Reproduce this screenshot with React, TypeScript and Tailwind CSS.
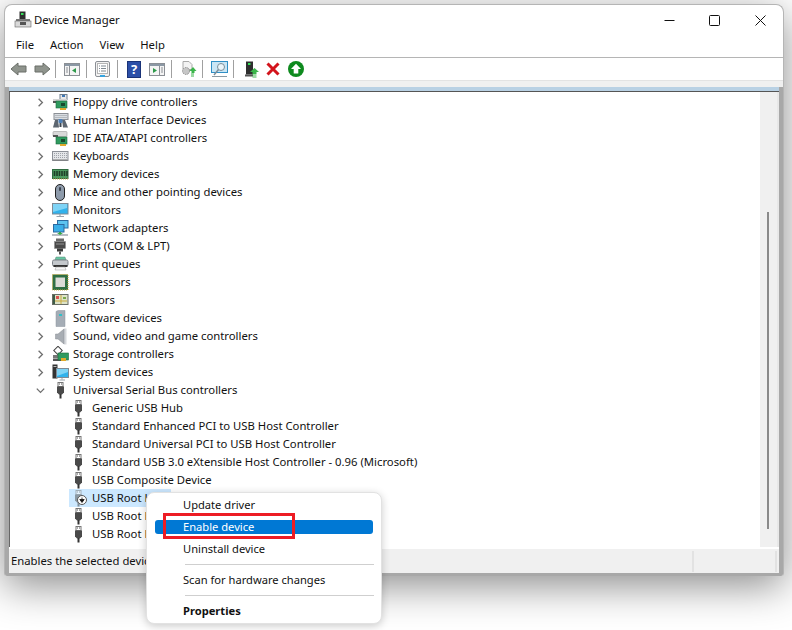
import React from 'react';

const Chip = () => (
  <>
    <rect x="4" y="7" width="11" height="7" fill="#2f9a5f" stroke="#1c6b3e" strokeWidth="0.6" />
    <rect x="9" y="9" width="4" height="3" fill="#18492c" />
    <rect x="8" y="14" width="6" height="2" fill="#e0a92a" />
  </>
);

const TreeIcon: React.FC<{ name: string }> = ({ name }) => {
  switch (name) {
    case 'floppy':
      return (
        <svg width="17" height="17" viewBox="0 0 17 17">
          <rect x="8" y="0.5" width="7" height="5" fill="#e8e8e8" stroke="#6f7f8f" />
          <rect x="10" y="1" width="3" height="2" fill="#3f77b5" />
          <rect x="1" y="5" width="14" height="3" fill="#d4d4d4" />
          <rect x="1" y="7" width="5" height="2" fill="#555" />
          <Chip />
        </svg>
      );
    case 'hid':
      return (
        <svg width="17" height="17" viewBox="0 0 17 17">
          <rect x="2" y="1.5" width="14" height="6" fill="#d9dde2" stroke="#8b8f95" />
          <path d="M3.5 3.5h11M3.5 5.5h11" stroke="#8f949a" strokeDasharray="1 1" />
          <path d="M1 15.5 3 8h3l1 7.5z" fill="#5d6670" />
          <path d="M11 15.5 10 8h3l3 7.5z" fill="#5d6670" />
          <rect x="6.5" y="7" width="4" height="4" rx="1" fill="#4c7fb8" />
          <rect x="7.5" y="11" width="2" height="4" fill="#3d4650" />
        </svg>
      );
    case 'ide':
      return (
        <svg width="17" height="17" viewBox="0 0 17 17">
          <rect x="1" y="1.5" width="14" height="5" rx="1" fill="#d9d9d9" stroke="#9a9a9a" strokeWidth="0.6" />
          <rect x="1" y="5" width="5" height="2" fill="#555" />
          <Chip />
        </svg>
      );
    case 'keyboard':
      return (
        <svg width="17" height="17" viewBox="0 0 17 17">
          <rect x="0.5" y="3.5" width="15.5" height="9" fill="#e4e6e9" stroke="#8c9097" />
          <path d="M2 5.5h13M2 7.5h13M2 9.5h13" stroke="#9fa3a9" strokeDasharray="1 1" />
          <rect x="1" y="11.5" width="14.5" height="1" fill="#777" />
        </svg>
      );
    case 'memory':
      return (
        <svg width="17" height="17" viewBox="0 0 17 17">
          <rect x="0.5" y="3.5" width="15.5" height="9" fill="#4d9a5f" stroke="#2f6b40" />
          <path d="M2.5 5v5M5 5v5M7.5 5v5M10 5v5M12.5 5v5M15 5v5" stroke="#1f3f28" strokeWidth="1.6" />
          <path d="M1 13h15" stroke="#c9b04a" strokeDasharray="1 1" />
        </svg>
      );
    case 'mouse':
      return (
        <svg width="17" height="17" viewBox="0 0 17 17">
          <rect x="3.5" y="0.5" width="9" height="16" rx="4.5" fill="#8e9bab" stroke="#222" />
          <rect x="7" y="3" width="2" height="4" rx="1" fill="#3b4552" />
        </svg>
      );
    case 'monitor':
      return (
        <svg width="17" height="17" viewBox="0 0 17 17">
          <rect x="0.5" y="1.5" width="15.5" height="10.5" fill="#31b2ec" stroke="#7f8b96" />
          <path d="M1 2h14v4L1 10z" fill="#7fd4f6" />
          <path d="M8 12v2M4.5 14.5h7.5" stroke="#9aa3ab" strokeWidth="1.2" />
        </svg>
      );
    case 'network':
      return (
        <svg width="17" height="17" viewBox="0 0 17 17">
          <rect x="5.5" y="0.5" width="10.5" height="7.5" fill="#5cc3f0" stroke="#2c6aa0" />
          <rect x="1.5" y="4.5" width="10.5" height="7.5" fill="#3aaee8" stroke="#2c6aa0" />
          <path d="M0 15h16" stroke="#9aa3ab" strokeWidth="1.4" />
          <path d="M7 12v1H5l3 2 3-2H9v-1z" fill="#35a845" />
        </svg>
      );
    case 'ports':
      return (
        <svg width="17" height="17" viewBox="0 0 17 17">
          <rect x="4" y="0.5" width="8" height="3" fill="#6a6a6a" />
          <rect x="2.5" y="3.5" width="11" height="7" fill="#4a4a4a" stroke="#8a8a8a" strokeWidth="0.5" />
          <path d="M4.5 6h7" stroke="#ddd" strokeDasharray="1 1" />
          <rect x="5" y="10.5" width="6" height="3" fill="#3a3a3a" />
          <rect x="7" y="13.5" width="2" height="3" fill="#555" />
        </svg>
      );
    case 'printer':
      return (
        <svg width="17" height="17" viewBox="0 0 17 17">
          <path d="M4 1h9l1 3H3z" fill="#67c6a2" stroke="#5a8a78" strokeWidth="0.5" />
          <rect x="0.5" y="4" width="15.5" height="6" rx="1.5" fill="#c4c8cc" stroke="#7d8288" />
          <rect x="1.5" y="9" width="14" height="2" fill="#333" />
          <path d="M4 11h9l1 3H3z" fill="#f5f5f5" stroke="#999" strokeWidth="0.5" />
        </svg>
      );
    case 'cpu':
      return (
        <svg width="17" height="17" viewBox="0 0 17 17">
          <rect x="0.5" y="0.5" width="15.5" height="15.5" fill="#2f6f45" stroke="#c7a83c" strokeDasharray="1 1" />
          <rect x="1.5" y="1.5" width="13.5" height="13.5" fill="#2f6f45" />
          <rect x="3.5" y="3.5" width="9.5" height="9.5" fill="#dcdcd8" />
        </svg>
      );
    case 'sensor':
      return (
        <svg width="17" height="17" viewBox="0 0 17 17">
          <rect x="0.5" y="2.5" width="15.5" height="10" fill="#dde3c8" stroke="#6a6f66" />
          <path d="M1 9h14M9 3v9" stroke="#c9a93c" />
          <rect x="4" y="4" width="3" height="3" fill="#d9534f" />
          <rect x="11" y="5" width="3" height="2" fill="#7aa84a" />
          <rect x="1" y="3" width="2" height="9" fill="#3e5c46" />
        </svg>
      );
    case 'software':
      return (
        <svg width="17" height="17" viewBox="0 0 17 17">
          <path d="M4 1.5 6 0.5h7v16H4z" fill="#a5adb6" stroke="#8d959e" strokeWidth="0.5" />
          <rect x="7" y="4" width="3" height="2" fill="#30c0c8" />
        </svg>
      );
    case 'sound':
      return (
        <svg width="17" height="17" viewBox="0 0 17 17">
          <rect x="12" y="0.5" width="2.5" height="16" fill="#d5d8db" />
          <path d="M12 1 6 6H3.5v5H6l6 5z" fill="#a8adb3" stroke="#8a8f95" strokeWidth="0.5" />
        </svg>
      );
    case 'storage':
      return (
        <svg width="17" height="17" viewBox="0 0 17 17">
          <rect x="3" y="1.5" width="6" height="6" transform="rotate(45 6 4.5)" fill="#fff" stroke="#444" />
          <rect x="1" y="9" width="9" height="3" fill="#777" />
          <rect x="1" y="12.5" width="9" height="2.5" fill="#555" />
          <rect x="6" y="7" width="10.5" height="7" fill="#2f9a5f" stroke="#1c6b3e" strokeWidth="0.6" />
          <rect x="9" y="12" width="5" height="3" fill="#e0a92a" />
        </svg>
      );
    case 'system':
      return (
        <svg width="17" height="17" viewBox="0 0 17 17">
          <rect x="0.5" y="0.5" width="5" height="14" fill="#333" />
          <rect x="1.5" y="2" width="3" height="1" fill="#bbb" />
          <rect x="4.5" y="4.5" width="12" height="9" fill="#31b2ec" stroke="#7f8b96" />
          <path d="M5 5h11v3L5 12z" fill="#7fd4f6" />
          <path d="M10 14v1.5M7.5 16h5.5" stroke="#9aa3ab" />
        </svg>
      );
    default:
      return (
        <svg width="17" height="17" viewBox="0 0 17 17">
          <rect x="6" y="0.5" width="5" height="4" fill="#fff" stroke="#777" />
          <rect x="7" y="1.5" width="1" height="1" fill="#555" />
          <rect x="9" y="1.5" width="1" height="1" fill="#555" />
          <path d="M5 4.5h7v6l-2 2H7l-2-2z" fill="#4a4a4a" />
          <rect x="7.5" y="12" width="2" height="4.5" fill="#333" />
        </svg>
      );
  }
};

const Chevron = ({ open }: { open?: boolean }) => (
  <svg width="9" height="9" viewBox="0 0 9 9" fill="none" stroke="#6f6f6f" strokeWidth="1.3">
    {open ? <path d="M0.8 2.6 4.5 6.4 8.2 2.6" /> : <path d="M2.6 0.8 6.4 4.5 2.6 8.2" />}
  </svg>
);

const topRows = [
  ['floppy', 'Floppy drive controllers'],
  ['hid', 'Human Interface Devices'],
  ['ide', 'IDE ATA/ATAPI controllers'],
  ['keyboard', 'Keyboards'],
  ['memory', 'Memory devices'],
  ['mouse', 'Mice and other pointing devices'],
  ['monitor', 'Monitors'],
  ['network', 'Network adapters'],
  ['ports', 'Ports (COM & LPT)'],
  ['printer', 'Print queues'],
  ['cpu', 'Processors'],
  ['sensor', 'Sensors'],
  ['software', 'Software devices'],
  ['sound', 'Sound, video and game controllers'],
  ['storage', 'Storage controllers'],
  ['system', 'System devices'],
];

const usbRows = [
  'Generic USB Hub',
  'Standard Enhanced PCI to USB Host Controller',
  'Standard Universal PCI to USB Host Controller',
  'Standard USB 3.0 eXtensible Host Controller - 0.96 (Microsoft)',
  'USB Composite Device',
];

const ToolSep = () => <div className="w-px h-[18px] bg-[#a0a0a0]" />;

const Toolbar = () => (
  <div className="h-[23px] flex items-center pl-[5px] border-b border-[#e3e3e3]">
    <svg width="18" height="16" viewBox="0 0 18 16">
      <path d="M1 8 8 2v3h8v6H8v3z" fill="#8f948d" stroke="#6a6f69" />
    </svg>
    <svg width="18" height="16" viewBox="0 0 18 16" className="ml-[5px]">
      <path d="M17 8 10 2v3H2v6h8v3z" fill="#8f948d" stroke="#6a6f69" />
    </svg>
    <div className="ml-[4px]"><ToolSep /></div>
    <svg width="16" height="16" viewBox="0 0 16 16" className="ml-2">
      <rect x="0.5" y="2.5" width="15" height="12" fill="#f4f4f4" stroke="#8b8f95" />
      <rect x="1" y="3" width="14" height="2" fill="#8b98a5" />
      <path d="M5.5 5v9" stroke="#8b8f95" />
      <path d="M2 7h2M2 9h2M2 11h2" stroke="#8b8f95" />
      <path d="M12 7v5L8 9.500z" fill="#2d9a4a" />
    </svg>
    <div className="ml-[6px]"><ToolSep /></div>
    <svg width="16" height="17" viewBox="0 0 16 17" className="ml-2">
      <rect x="0.5" y="0.5" width="14" height="15" rx="1.5" fill="#f2f2f2" stroke="#8b8f95" />
      <rect x="2.5" y="2.5" width="10" height="10" fill="#fff" stroke="#b5b5b5" />
      <path d="M4 5h1M6 5h5M4 7.500h1M6 7.500h5M4 10h1M6 10h5" stroke="#7d8790" />
      <rect x="5" y="14" width="5" height="2" fill="#35a4e0" />
    </svg>
    <div className="ml-[6px]"><ToolSep /></div>
    <div className="ml-[9px] w-[14px] h-[17px] flex items-center justify-center bg-[#2c4fa8] border border-[#1a3378] text-white text-[13px] font-bold leading-none">?</div>
    <svg width="16" height="16" viewBox="0 0 16 16" className="ml-2">
      <rect x="0.5" y="2.5" width="15" height="12" fill="#f4f4f4" stroke="#8b8f95" />
      <rect x="1" y="3" width="14" height="2" fill="#8b98a5" />
      <path d="M10.500 5v9" stroke="#8b8f95" />
      <path d="M12 7h2M12 9h2M12 11h2" stroke="#8b8f95" />
      <path d="M4 7v5l4-2.500z" fill="#2d9a4a" />
    </svg>
    <div className="ml-[6px]"><ToolSep /></div>
    <svg width="17" height="17" viewBox="0 0 17 17" className="ml-2">
      <path d="M3 0.500h6l3 3v5H3z" fill="#f3f3f3" stroke="#a9a9a9" />
      <circle cx="6" cy="10" r="3.500" fill="#c6c6c6" stroke="#8d8d8d" strokeDasharray="1.500 1" />
      <path d="M13 6l3.500 4H14.500v2h-3v-2H9.500z" fill="#3bb54a" />
      <path d="M11 13h3M11 15h3" stroke="#3bb54a" />
    </svg>
    <div className="ml-[5px]"><ToolSep /></div>
    <svg width="17" height="17" viewBox="0 0 17 17" className="ml-2">
      <rect x="0.5" y="0.500" width="16" height="11" fill="#c9e6f5" stroke="#2f8fc6" />
      <circle cx="10" cy="6" r="3.500" fill="#eaf6fb" stroke="#7a8d99" />
      <path d="M7.500 8.500 3 14" stroke="#7a8d99" strokeWidth="1.400" />
      <path d="M1 15.500h15" stroke="#8a9aa3" />
    </svg>
    <div className="ml-[5px]"><ToolSep /></div>
    <svg width="16" height="17" viewBox="0 0 16 17" className="ml-[10px]">
      <rect x="2" y="0.500" width="7" height="13" fill="#2e2e2e" />
      <rect x="4" y="2" width="2.500" height="2" fill="#35e05a" />
      <path d="M1 14.500h8" stroke="#555" strokeWidth="2" />
      <path d="M10.500 7l4.500 4h-2.500v2h-4v-2H6z" fill="#3bb54a" />
      <path d="M8.500 14h4M8.500 16h4" stroke="#3bb54a" />
    </svg>
    <svg width="14" height="14" viewBox="0 0 14 14" className="ml-[6px]">
      <path d="M1.500 1.500 12.500 12.500M12.500 1.500 1.500 12.500" stroke="#d3141c" strokeWidth="3" />
    </svg>
    <svg width="16" height="16" viewBox="0 0 16 16" className="ml-2">
      <circle cx="8" cy="8" r="8" fill="#0e8a1e" />
      <path d="M8 2.800 13 8H10.300v4.500H5.700V8H3z" fill="#fff" />
    </svg>
  </div>
);

const App = () => (
  <div
    className="relative w-[792px] h-[630px] overflow-hidden bg-white pt-1 pl-1 text-[11.3px] leading-[18px] text-[#111]"
    style={{ fontFamily: '"Noto Sans", Roboto, sans-serif' }}
  >
    <div className="flex flex-col w-[780px] h-[572px] rounded-t-lg rounded-b-[3px] bg-white border-t border-x border-[#b5b5b5] shadow-[0_10px_40px_rgba(0,0,0,0.45)]">
      <div className="h-[30px] flex items-center pl-[9px]">
        <svg width="18" height="18" viewBox="0 0 18 18">
          <rect x="5.500" y="0.500" width="6" height="10" fill="#2e2e2e" />
          <rect x="7" y="2" width="2.500" height="2" fill="#35e05a" />
          <path d="M2 8h14v5.500H2z" fill="#7a7a7a" />
          <rect x="1" y="10" width="16" height="6" fill="#d9d9d9" stroke="#666" strokeWidth="0.600" />
          <rect x="6" y="11" width="6" height="3" fill="#555" />
        </svg>
        <span className="ml-[2px]">Device Manager</span>
        <div className="ml-auto flex items-center pr-[17px]">
          <svg width="11" height="11" viewBox="0 0 11 11"><path d="M0.500 5.500h10" stroke="#111" /></svg>
          <svg width="11" height="11" viewBox="0 0 11 11" className="ml-[34px]"><rect x="0.500" y="0.500" width="10" height="10" rx="1" fill="none" stroke="#111" /></svg>
          <svg width="11" height="11" viewBox="0 0 11 11" className="ml-[35px]"><path d="M0.500 0.500 10.500 10.500M10.500 0.500 0.500 10.500" stroke="#111" /></svg>
        </div>
      </div>

      <div className="h-[23px] flex items-center gap-[16px] pl-[11px] pb-[2px] border-b border-[#b5b5b5]">
        <span>File</span>
        <span>Action</span>
        <span>View</span>
        <span>Help</span>
      </div>

      <Toolbar />
      <div className="h-[6px] bg-[#f0f0f0]" />

      <div className="flex-1 min-h-0 flex flex-col border-x-[4px] border-b-[3px] border-[#a8a8a8] rounded-b-[3px]">
        <div className="h-[5px] bg-[#b9d1e4] border-b border-[#555]" />
        <div className="flex-1 min-h-0 flex bg-white border-l border-[#666] border-r-2 border-r-[#e8e8e8]">
          <div className="flex-1 min-w-0 pt-px overflow-hidden">
            {topRows.map(([icon, label]) => (
              <div key={label} className="h-[18px] flex items-center pl-[26px]">
                <Chevron />
                <div className="ml-[7px] w-[17px] flex justify-center"><TreeIcon name={icon} /></div>
                <span className="ml-[4px] whitespace-nowrap">{label}</span>
              </div>
            ))}
            <div className="h-[18px] flex items-center pl-[26px]">
              <Chevron open />
              <div className="ml-[7px] w-[17px] flex justify-center"><TreeIcon name="usb" /></div>
              <span className="ml-[4px] whitespace-nowrap">Universal Serial Bus controllers</span>
            </div>
            {usbRows.map(label => (
              <div key={label} className="h-[18px] flex items-center pl-[60px]">
                <div className="w-[17px] flex justify-center"><TreeIcon name="usb" /></div>
                <span className="ml-[5px] whitespace-nowrap">{label}</span>
              </div>
            ))}
            <div className="h-[18px] flex items-center pl-[59px]">
              <div className="relative w-[102px] h-[18px] flex items-center pl-px bg-[#cce8ff]">
                <div className="w-[17px] flex justify-center opacity-50"><TreeIcon name="usb" /></div>
                <span className="ml-[5px] whitespace-nowrap">USB Root Hub</span>
                <svg width="10" height="10" viewBox="0 0 10 10" className="absolute left-[8px] top-[6px]">
                  <circle cx="5" cy="5" r="4.500" fill="#fff" stroke="#555" />
                  <path d="M5 2.500v2M2.800 4.500h4.400L5 7.500z" fill="#111" stroke="#111" strokeWidth="0.800" />
                </svg>
              </div>
            </div>
            {['a', 'b'].map(k => (
              <div key={k} className="h-[18px] flex items-center pl-[60px]">
                <div className="w-[17px] flex justify-center"><TreeIcon name="usb" /></div>
                <span className="ml-[5px] whitespace-nowrap">USB Root Hub</span>
              </div>
            ))}
          </div>
          <div className="w-[17px] bg-[#f0f0f0] flex flex-col pt-[120px]">
            <div className="ml-[7px] w-[2px] h-[317px] bg-[#8a8a8a]" />
          </div>
        </div>
        <div className="h-[26px] flex items-center pl-[2px] border-t-2 border-white bg-[#f0f0f0]">
          <span className="whitespace-nowrap">Enables the selected device.</span>
          <div className="ml-auto flex h-[21px]">
            <div className="w-[85px] border-l-2 border-r-2 border-[#e2e2e2]" />
            <div className="w-[2px]" />
          </div>
        </div>
      </div>
    </div>

    <div className="absolute left-[146px] top-[492px] w-[236px] h-[132px] rounded-lg bg-white border border-[#e2e2e2] shadow-[0_2px_8px_rgba(0,0,0,0.2)] pt-[1px] text-[11.15px]">
      <div className="h-[22px] flex items-center pl-[36px]">Update driver</div>
      <div className="h-[22px] flex items-center pl-[36px]">
        <div className="absolute left-2 w-[218px] h-[14px] rounded-[3px] bg-[#0078d4]" />
        <span className="relative text-white">Enable device</span>
      </div>
      <div className="h-[22px] flex items-center pl-[36px]">Uninstall device</div>
      <div className="h-[5px] ml-[38px] mr-[7px] border-b border-[#cfcfcf]" />
      <div className="h-[30px] flex items-center pl-[36px]">Scan for hardware changes</div>
      <div className="ml-[38px] mr-[7px] border-b border-[#cfcfcf]" />
      <div className="h-[28px] flex items-center pl-[36px] pt-[2px] font-bold">Properties</div>
      <div className="absolute left-4 top-[20px] w-[132px] h-[26px] border-[3px] border-[#ed1c24]" />
    </div>
  </div>
);

export default App;
